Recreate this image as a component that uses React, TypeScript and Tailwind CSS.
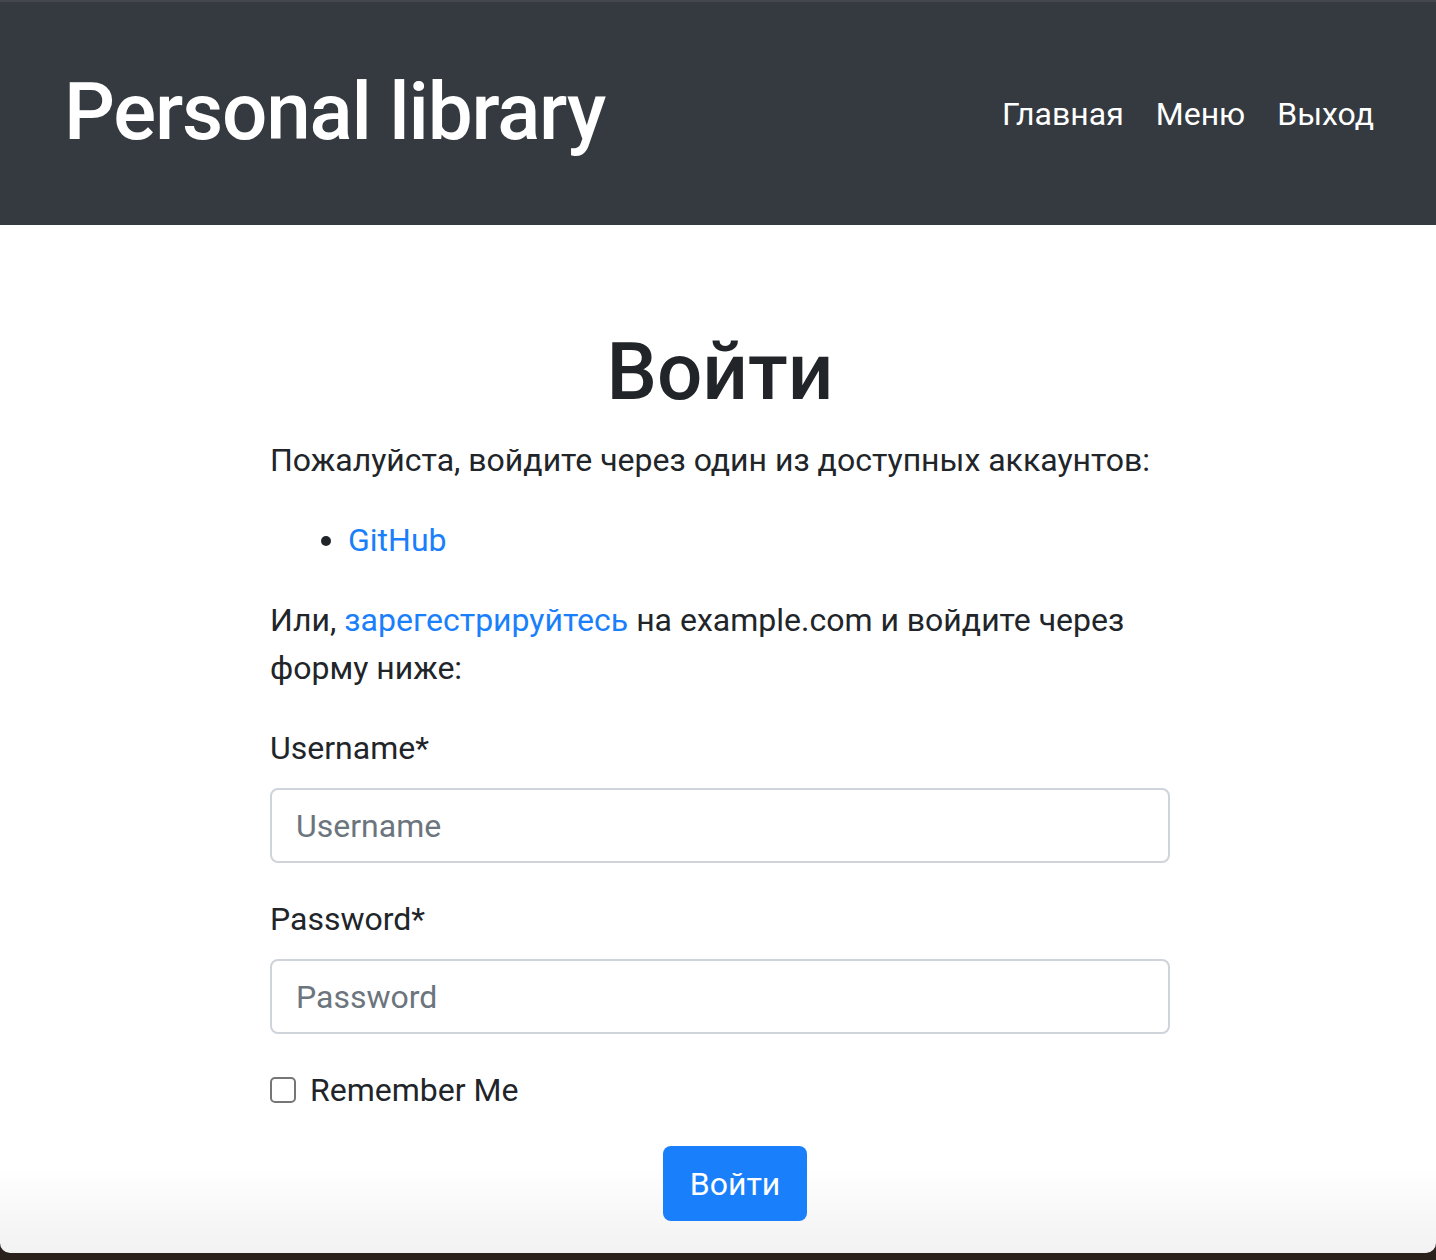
import React from "react";

const NAV = ["Главная", "Меню", "Выход"];

function Field({ label, placeholder, type }: { label: string; placeholder: string; type: string }) {
  return (
    <div className="mb-[32px]">
      <label className="block mb-[16px]">{label}</label>
      <input
        type={type}
        placeholder={placeholder}
        className="block w-full h-[75px] px-[24px] border-2 border-[#ced4da] rounded-[8px] text-[32px] text-[#495057] placeholder:text-[#6c757d] outline-none bg-white"
      />
    </div>
  );
}

export default function App() {
  return (
    <div
      className="h-[1260px] bg-[#2a211c] text-[#212529] text-[32px] leading-[48px]"
      style={{ fontFamily: "Roboto, 'Noto Sans', sans-serif" }}
    >
      <div className="h-[1253px] rounded-b-[10px] overflow-hidden bg-[linear-gradient(to_bottom,#ffffff_93%,#f2f2f2)]">
        <header className="h-[225px] bg-[#343a40] border-t-2 border-[#44484e] flex items-center justify-between pl-[64px] pr-[46px]">
          <a className="text-white text-[80px] leading-[96px] font-medium tracking-[-1.2px] pb-[4px]">Personal library</a>
          <nav className="flex">
            {NAV.map((n) => (
              <a key={n} className="text-white px-[16px]">
                {n}
              </a>
            ))}
          </nav>
        </header>

        <main className="w-[904px] mx-auto pt-[99px] pl-[4px]">
          <h1 className="text-center text-[80px] leading-[96px] font-medium mb-[16px]">Войти</h1>
          <p className="mb-[32px]">Пожалуйста, войдите через один из доступных аккаунтов:</p>
          <ul className="list-disc pl-[78px] mb-[32px]">
            <li>
              <a className="text-[#1a7ffb]">GitHub</a>
            </li>
          </ul>
          <p className="mb-[32px]">
            Или, <a className="text-[#1a7ffb]">зарегестрируйтесь</a> на example.com и войдите через форму ниже:
          </p>
          <form>
            <Field label="Username*" placeholder="Username" type="text" />
            <Field label="Password*" placeholder="Password" type="password" />
            <div className="flex items-center mb-[32px]">
              <span className="w-[26px] h-[26px] border-2 border-[#767676] rounded-[5px] bg-white mr-[14px]" />
              <span>Remember Me</span>
            </div>
            <div className="flex justify-center pl-[30px]">
              <button
                type="button"
                className="h-[75px] px-[27px] bg-[#1a7ffb] text-white rounded-[8px]"
              >
                Войти
              </button>
            </div>
          </form>
        </main>
      </div>
    </div>
  );
}
